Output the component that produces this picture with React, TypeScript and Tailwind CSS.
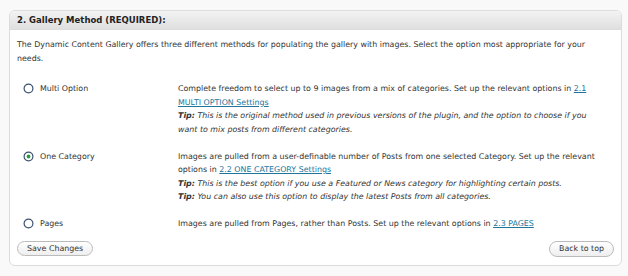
import React from "react";

const Radio = ({ checked }: { checked?: boolean }) => (
  <svg width="11" height="11" viewBox="0 0 11 11" className="shrink-0">
    <circle cx="5.5" cy="5.5" r="4.4" fill="#fff" stroke="#3c5270" strokeWidth="1.2" />
    {checked && <circle cx="5.5" cy="5.5" r="1.9" fill="#2e9a3a" />}
  </svg>
);

const Link = ({ children }: { children: React.ReactNode }) => (
  <a href="#" className="text-[#21759b] underline">{children}</a>
);

const Tip = ({ children }: { children: React.ReactNode }) => (
  <span className="italic">
    <span className="font-bold">Tip:</span> {children}
  </span>
);

export default function App() {
  return (
    <div
      className="w-[628px] h-[276px] bg-[#f9f9f9] pt-[10px] pl-[9px] text-[#333] text-[7.9px]"
      style={{ fontFamily: '"DejaVu Sans", Verdana, sans-serif' }}
    >
      <div className="w-[613px] h-[256px] border border-[#dcdcdc] rounded-[6px] bg-white overflow-hidden flex flex-col">
        <div className="h-[19px] shrink-0 bg-gradient-to-b from-[#f3f3f3] to-[#dfdfdf] border-b border-[#dcdcdc] flex items-center px-[7px]">
          <span className="font-bold text-[8.5px] text-[#222]">2. Gallery Method (REQUIRED):</span>
        </div>
        <div className="flex flex-col px-[7px] pt-[8px]">
          <p className="leading-[14px] whitespace-nowrap">
            The Dynamic Content Gallery offers three different methods for populating the gallery with images. Select the option most appropriate for your
            <br />
            needs.
          </p>
          <div className="mt-[16px] flex flex-col gap-[13.5px] leading-[13.5px]">
            <div className="flex">
              <div className="w-[161px] flex items-center gap-[6px] pl-[6px] h-[13.5px]">
                <Radio />
                <span>Multi Option</span>
              </div>
              <div className="whitespace-nowrap">
                Complete freedom to select up to 9 images from a mix of categories. Set up the relevant options in <Link>2.1</Link>
                <br />
                <Link>MULTI OPTION Settings</Link>
                <br />
                <Tip>This is the original method used in previous versions of the plugin, and the option to choose if you</Tip>
                <br />
                <span className="italic">want to mix posts from different categories.</span>
              </div>
            </div>
            <div className="flex">
              <div className="w-[161px] flex items-center gap-[6px] pl-[6px] h-[13.5px]">
                <Radio checked />
                <span>One Category</span>
              </div>
              <div className="whitespace-nowrap">
                Images are pulled from a user-definable number of Posts from one selected Category. Set up the relevant
                <br />
                options in <Link>2.2 ONE CATEGORY Settings</Link>
                <br />
                <Tip>This is the best option if you use a Featured or News category for highlighting certain posts.</Tip>
                <br />
                <Tip>You can also use this option to display the latest Posts from all categories.</Tip>
              </div>
            </div>
            <div className="flex">
              <div className="w-[161px] flex items-center gap-[6px] pl-[6px] h-[13.5px]">
                <Radio />
                <span>Pages</span>
              </div>
              <div className="whitespace-nowrap">
                Images are pulled from Pages, rather than Posts. Set up the relevant options in <Link>2.3 PAGES</Link>
              </div>
            </div>
          </div>
          <div className="flex justify-between items-center mt-[10px]">
            <button className="h-[15px] px-[9px] rounded-full border border-[#bbb] bg-gradient-to-b from-white to-[#eee] text-[#333] text-[7.9px] leading-none">
              Save Changes
            </button>
            <button className="h-[16px] px-[9px] rounded-full border border-[#bbb] bg-gradient-to-b from-white to-[#eee] text-[#333] text-[7.9px] leading-none">
              Back to top
            </button>
          </div>
        </div>
      </div>
    </div>
  );
}
